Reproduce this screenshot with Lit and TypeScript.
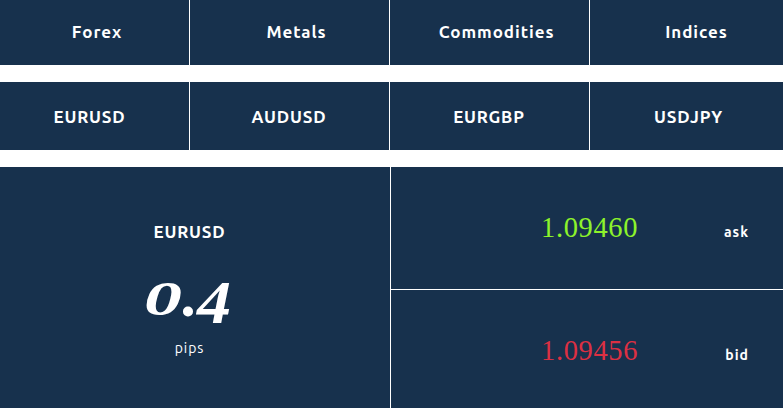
import { LitElement, html, css } from "lit";
import { customElement } from "lit/decorators.js";

const MARKETS = ["Forex", "Metals", "Commodities", "Indices"];
const PAIRS = ["EURUSD", "AUDUSD", "EURGBP", "USDJPY"];

@customElement("app-root")
export class AppRoot extends LitElement {
  static styles = css`
    :host {
      display: grid;
      grid-template-rows: 65px 68px 241px;
      row-gap: 17px;
      width: 783px;
      height: 408px;
      overflow: hidden;
      background: #fff;
      color: #fff;
      font-family: Ubuntu, "Noto Sans", "Open Sans", sans-serif;
    }
    .tabs {
      display: grid;
      grid-template-columns: 189px 199px 199px 193px;
      column-gap: 1px;
    }
    .tab {
      display: flex;
      align-items: center;
      justify-content: center;
      box-sizing: border-box;
      background: #17314d;
      font-size: 17px;
      font-weight: 600;
      line-height: 24px;
      white-space: nowrap;
    }
    .markets .tab {
      letter-spacing: 0.95px;
      padding-left: 14px;
      padding-bottom: 2px;
    }
    .pairs .tab {
      letter-spacing: 0.8px;
      padding-top: 1px;
      padding-right: 1px;
    }
    .markets .tab:first-child {
      padding-left: 5px;
    }
    .pairs .tab:first-child {
      padding-right: 10px;
    }
    .markets .tab:last-child {
      padding-left: 20px;
    }
    .pairs .tab:last-child {
      padding-left: 5px;
    }
    .quote {
      display: grid;
      grid-template-columns: 390px 392px;
      column-gap: 1px;
    }
    .spread {
      display: flex;
      flex-direction: column;
      align-items: center;
      box-sizing: border-box;
      padding: 53px 11px 0 0;
      background: #17314d;
    }
    .symbol {
      font-size: 17px;
      font-weight: 600;
      line-height: 24px;
      letter-spacing: 0.8px;
    }
    .value {
      display: grid;
      grid-template-columns: 38px 14px 38px;
      height: 62px;
      padding: 32px 0 0 0;
      font: italic bold 49px/46px "Liberation Serif", serif;
    }
    .digit {
      display: block;
      line-height: 46px;
      transform-origin: 0 100%;
    }
    .zero {
      width: 23px;
      transform: translateX(-1px) scaleX(1.55);
    }
    .point {
      width: 11px;
      font-size: 62px;
      transform: translateY(-4px);
    }
    .four {
      width: 30px;
      font-size: 61px;
      transform: translateY(4px) scaleX(1.12);
    }
    .unit {
      font-size: 14px;
      line-height: 20px;
      letter-spacing: 0.9px;
    }
    .prices {
      display: grid;
      grid-template-rows: 122px 118px;
      row-gap: 1px;
    }
    .price {
      display: flex;
      align-items: baseline;
      justify-content: space-between;
      box-sizing: border-box;
      padding: 44px 34px 0 150px;
      background: #17314d;
    }
    .amount {
      font: 28.5px/34px "Liberation Serif", serif;
      letter-spacing: 0.65px;
    }
    .ask .amount {
      color: #8df32b;
    }
    .bid .amount {
      color: #dc3043;
    }
    .side {
      font-size: 14px;
      font-weight: 600;
      letter-spacing: 1px;
    }
  `;

  private tabs(labels: string[], kind: string) {
    return html`<nav class="tabs ${kind}">
      ${labels.map((label) => html`<div class="tab">${label}</div>`)}
    </nav>`;
  }

  private price(amount: string, side: string) {
    return html`<div class="price ${side}">
      <span class="amount">${amount}</span><span class="side">${side}</span>
    </div>`;
  }

  render() {
    return html`
      ${this.tabs(MARKETS, "markets")} ${this.tabs(PAIRS, "pairs")}
      <section class="quote">
        <div class="spread">
          <div class="symbol">EURUSD</div>
          <div class="value"><span class="digit zero">0</span><span class="digit point">.</span><span class="digit four">4</span></div>
          <div class="unit">pips</div>
        </div>
        <div class="prices">
          ${this.price("1.09460", "ask")} ${this.price("1.09456", "bid")}
        </div>
      </section>
    `;
  }
}
